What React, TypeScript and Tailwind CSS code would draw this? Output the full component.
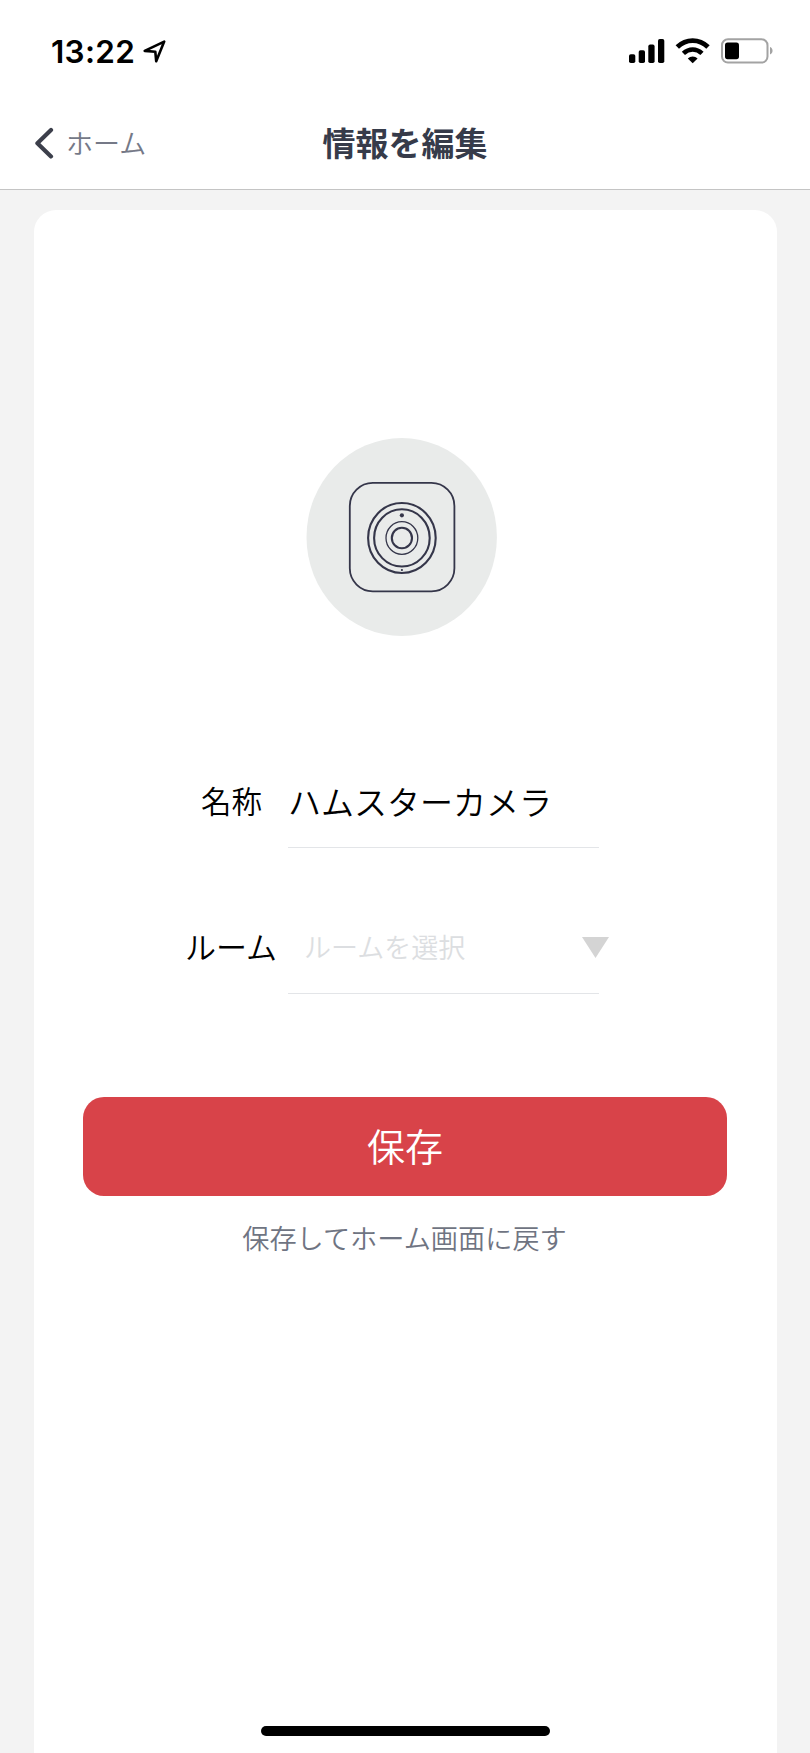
import type { ReactNode } from "react";

const StatusBar = () => (
  <div className="flex h-[103px] items-start justify-between pl-[51px] pr-[37px] pt-[35px]">
    <div className="flex items-center gap-[8px]">
      <span className="font-['Inter'] text-[31.5px] font-semibold leading-[33px] tracking-[0.3px] text-black">
        13:22
      </span>
      <svg width="23" height="23" viewBox="0 0 23 23" fill="none">
        <path
          d="M1.7 10.9 21.2 1.6 13.2 21.2 12.3 11.7Z"
          stroke="#000"
          strokeWidth="2.6"
          strokeLinejoin="round"
        />
      </svg>
    </div>
    <div className="flex items-center pt-[3px]">
      {/* Signal */}
      <svg width="36" height="26" viewBox="0 0 36 26" fill="#000">
        <rect x="0" y="16.3" width="6.3" height="8.7" rx="1.8" />
        <rect x="9.7" y="12.3" width="6.3" height="12.7" rx="1.8" />
        <rect x="19.3" y="6.6" width="6.3" height="18.4" rx="1.8" />
        <rect x="29" y="1" width="6.3" height="24" rx="1.8" />
      </svg>
      {/* Wi-Fi */}
      <svg
        className="ml-[10px]"
        width="36"
        height="26"
        viewBox="0 0 36 26"
        fill="none"
      >
        <path d="M2.3 9C11.2 .5 24.1 .5 33 9" stroke="#000" strokeWidth="4.9" />
        <path
          d="M8.4 15.4C14 10.1 21.4 10.1 27 15.4"
          stroke="#000"
          strokeWidth="4.6"
        />
        <path
          d="M17.7 25.2 12.8 20.6C15.4 17.7 20 17.7 22.6 20.6Z"
          fill="#000"
        />
      </svg>
      {/* Battery */}
      <svg
        className="ml-[10px]"
        width="52"
        height="26"
        viewBox="0 0 52 26"
        fill="none"
      >
        <rect
          x="1"
          y="1.2"
          width="45.5"
          height="23.4"
          rx="6"
          stroke="#a3a3a3"
          strokeWidth="2"
        />
        <rect x="4" y="4.6" width="14" height="16.6" rx="2.6" fill="#000" />
        <path d="M49 9C52.4 10.2 52.4 15.2 49 16.4Z" fill="#a3a3a3" />
      </svg>
    </div>
  </div>
);

const NavBar = () => (
  <nav className="grid h-[87px] grid-cols-3 items-start border-b border-[#c4c4c4] pl-[34px] pr-[34px]">
    <a className="flex h-20 items-center gap-[12px]">
      <svg width="20" height="32" viewBox="0 0 20 32" fill="none">
        <path
          d="M17 3 3.4 16.2 17 29.4"
          stroke="#3c3f4b"
          strokeWidth="4.2"
          strokeLinecap="round"
          strokeLinejoin="round"
        />
      </svg>
      <span className="text-[27px] font-[350] text-[#757987]">ホーム</span>
    </a>
    <h1 className="flex h-20 items-center justify-center whitespace-nowrap text-[33px] font-bold text-[#363b4a]">
      情報を編集
    </h1>
  </nav>
);

const CameraIcon = () => (
  <svg
    width="192"
    height="198"
    viewBox="0 0 192 198"
    fill="none"
    stroke="#35364a"
  >
    <ellipse cx="95.7" cy="99" rx="95.2" ry="99" fill="#e9ebea" stroke="none" />
    <rect
      x="43.8"
      y="44.9"
      width="104.6"
      height="108.4"
      rx="23"
      strokeWidth="1.8"
    />
    <ellipse cx="95.9" cy="100" rx="33.8" ry="35" strokeWidth="2.1" />
    <ellipse cx="95.9" cy="99.9" rx="27.8" ry="28.6" strokeWidth="2.1" />
    <ellipse cx="95.9" cy="100" rx="15.9" ry="16.3" strokeWidth="1.3" />
    <ellipse cx="95.9" cy="100" rx="10.1" ry="10.3" strokeWidth="2.1" />
    <circle cx="95.9" cy="77.3" r="2.1" fill="#35364a" stroke="none" />
    <circle cx="95.9" cy="132" r="1.1" fill="#35364a" stroke="none" />
  </svg>
);

const Field = ({ label, children }: { label: ReactNode; children: ReactNode }) => (
  <div className="flex h-[91px]">
    <div className="flex h-[91px] w-[254px] items-start">{label}</div>
    <div className="flex h-[91px] w-[311px] items-start border-b border-[#e3e5e8]">
      {children}
    </div>
  </div>
);

export default function App() {
  return (
    <div className="flex h-[1753px] w-[810px] flex-col overflow-hidden bg-white font-['Noto_Sans_CJK_JP',sans-serif]">
      <StatusBar />
      <NavBar />

      <main className="flex flex-1 bg-[#f3f3f3] pl-[34px] pr-[33px] pt-5">
        <section className="flex flex-1 flex-col rounded-t-[22px] bg-white">
          <div className="mt-[228px] pl-[272px]">
            <CameraIcon />
          </div>

          <div className="mt-[121px]">
            <Field
              label={
                <span className="ml-[167px] text-[30.5px] font-[350] leading-[87px] text-black">
                  名称
                </span>
              }
            >
              <span className="whitespace-nowrap text-[33px] font-[350] leading-[88px] text-black">
                ハムスターカメラ
              </span>
            </Field>
          </div>

          <div className="mt-[55px]">
            <Field
              label={
                <span className="ml-[151px] text-[31px] font-[350] leading-[86px] text-black">
                  ルーム
                </span>
              }
            >
              <span className="ml-4 whitespace-nowrap text-[27px] font-[350] leading-[88px] text-[#dcdee1]">
                ルームを選択
              </span>
              <svg
                className="ml-[117px] mt-[34px] shrink-0"
                width="27"
                height="21"
                viewBox="0 0 27 21"
              >
                <path d="M0 0H27L13.5 21Z" fill="#d4d4d4" />
              </svg>
            </Field>
          </div>

          <button className="ml-[49px] mt-[103px] h-[99px] w-[644px] rounded-[21px] bg-[#d84349] pb-1 text-[38px] font-[350] leading-[95px] text-white">
            保存
          </button>
          <p className="mr-[2px] mt-[21px] text-center text-[27.2px] font-[350] leading-10 text-[#6f7482]">
            保存してホーム画面に戻す
          </p>

          {/* Home indicator */}
          <div className="mx-auto mb-[17px] mt-auto h-[10px] w-[289px] rounded-full bg-black" />
        </section>
      </main>
    </div>
  );
}
